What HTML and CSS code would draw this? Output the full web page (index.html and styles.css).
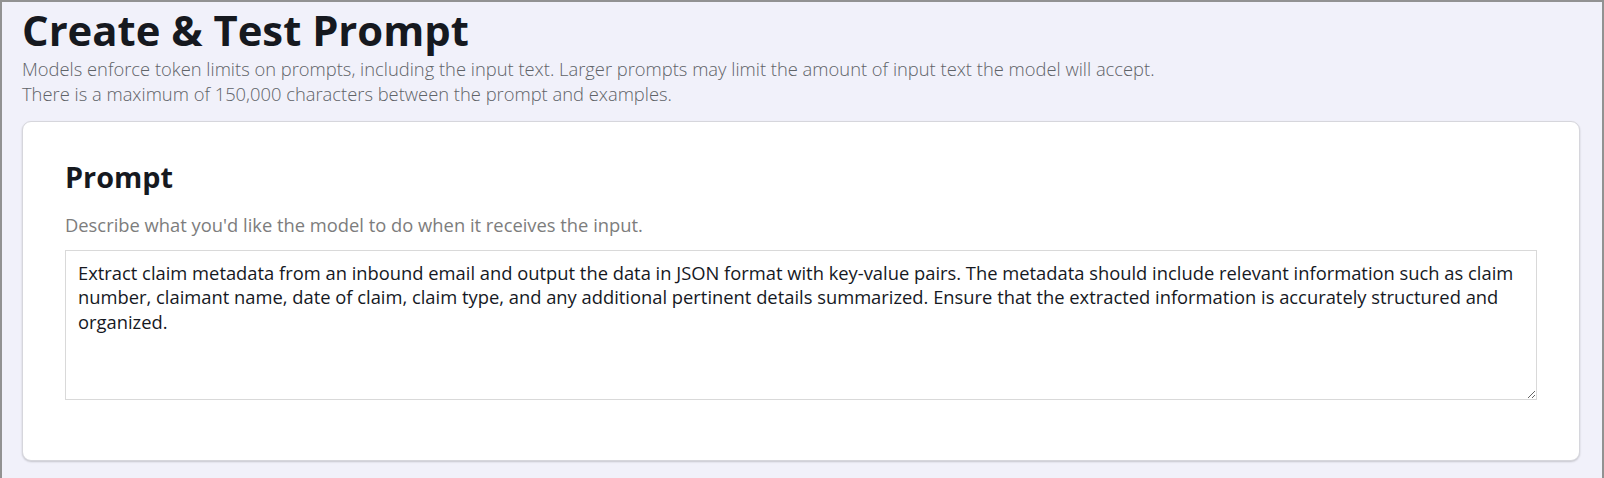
FILE: index.html
```html
<!DOCTYPE html>
<html lang="en">
<head>
<meta charset="utf-8">
<title>Create &amp; Test Prompt</title>
<link rel="stylesheet" href="styles.css">
</head>
<body>
<div class="frame">
  <header class="page-header">
    <h1 class="page-title">Create &amp; Test Prompt</h1>
    <p class="page-desc">Models enforce token limits on prompts, including the input text. Larger prompts may limit the amount of input text the model will accept.<br>There is a maximum of 150,000 characters between the prompt and examples.</p>
  </header>
  <section class="card">
    <h2 class="card-title">Prompt</h2>
    <p class="card-desc">Describe what you'd like the model to do when it receives the input.</p>
    <textarea class="prompt-input">Extract claim metadata from an inbound email and output the data in JSON format with key-value pairs. The metadata should include relevant information such as claim number, claimant name, date of claim, claim type, and any additional pertinent details summarized. Ensure that the extracted information is accurately structured and organized.</textarea>
  </section>
</div>
</body>
</html>
```

FILE: styles.css
```css
html, body {
  margin: 0;
  padding: 0;
  background: #f1f1fa;
}
body {
  font-family: "Open Sans", "Noto Sans", sans-serif;
  color: #16191f;
}
.frame {
  box-sizing: border-box;
  min-height: 478px;
  border: 2px solid #929292;
  border-bottom: none;
  padding: 0 22px 0 20px;
  display: flex;
  flex-direction: column;
}
.page-header {
  display: flex;
  flex-direction: column;
}
.page-title {
  margin: 0;
  font-size: 41.8px;
  font-weight: 700;
  line-height: 55px;
  color: #16191f;
}
.page-desc {
  margin: 0;
  font-size: 18.35px;
  font-weight: 300;
  line-height: 24.5px;
  color: #5f6368;
}
.card {
  margin-top: 15px;
  background: #ffffff;
  border: 1px solid #d6d6dc;
  border-radius: 9px;
  box-shadow: 0 1px 2px rgba(0, 0, 0, 0.18);
  padding: 36px 42px 60px 42px;
  display: flex;
  flex-direction: column;
}
.card-title {
  margin: 0;
  font-size: 28.8px;
  font-weight: 700;
  line-height: 38px;
  color: #16191f;
}
.card-desc {
  margin: 17px 0 12px 0;
  font-size: 18.35px;
  font-weight: 400;
  line-height: 24.5px;
  color: #7d7d7d;
}
.prompt-input {
  box-sizing: border-box;
  width: 100%;
  height: 150px;
  margin: 0;
  padding: 10px 12px;
  border: 1px solid #d9d9d9;
  border-radius: 0;
  font-family: "Open Sans", "Noto Sans", sans-serif;
  font-size: 18.35px;
  line-height: 24.5px;
  color: #16191f;
  background: #ffffff;
  outline: none;
  resize: vertical;
}
```
